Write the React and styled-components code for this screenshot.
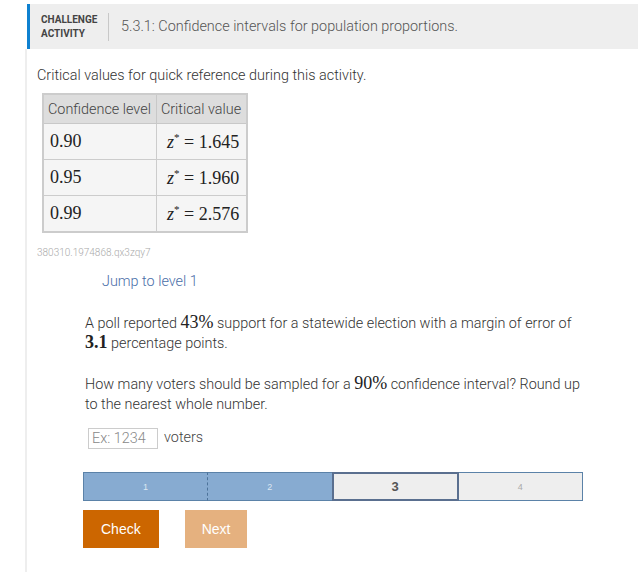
import React from "react";
import styled, { createGlobalStyle } from "styled-components";

const GlobalStyle = createGlobalStyle`
  body {
    margin: 0;
    background: #fff;
    font-family: Roboto, "Liberation Sans", sans-serif;
    color: #333;
  }
`;

const Page = styled.div`
  padding: 4px 0 0 25px;
  min-height: 568px;
`;

const Header = styled.div`
  display: flex;
  align-items: center;
  height: 45px;
  margin-left: 2px;
  background: #eee;
  border-left: 3px solid #0f81d0;
`;

const Label = styled.div`
  width: 67px;
  padding-left: 11px;
  font-size: 10px;
  font-weight: 700;
  line-height: 14px;
  color: #444;
`;

const Divider = styled.div`
  width: 1px;
  height: 28px;
  background: #c8c8c8;
  margin-right: 12px;
`;

const Title = styled.div`
  font-size: 14.4px;
  font-weight: 300;
  color: #555;
`;

const Body = styled.div`
  border-left: 2px solid #eee;
  padding: 18px 0 24px 10px;
`;

const Intro = styled.p`
  margin: 0 0 9px;
  font-size: 14.4px;
  font-weight: 300;
  color: #333;
`;

const Table = styled.table`
  margin-left: 5px;
  border-collapse: collapse;
  border: 2px solid #ccc;
`;

const HeadCell = styled.th`
  height: 28px;
  padding: 0 5px 0 4px;
  background: #ddd;
  border: 1px solid #c8c8c8;
  font-size: 14.4px;
  font-weight: 300;
  color: #444;
  text-align: left;
  white-space: nowrap;
`;

const Cell = styled.td`
  height: 35px;
  padding: 0 7px 0 6px;
  background: #f5f5f5;
  border: 1px solid #ccc;
  font-family: "Liberation Serif", "DejaVu Serif", serif;
  font-size: 18px;
  color: #222;
  text-align: ${(p) => (p.right ? "right" : "left")};
  white-space: nowrap;
`;

const Star = styled.sup`
  font-size: 11px;
`;

const Math = styled.span`
  font-family: "Liberation Serif", "DejaVu Serif", serif;
  font-size: 18px;
  line-height: 0;
  color: #222;
  font-weight: ${(p) => (p.bold ? 700 : 400)};
`;

const Var = styled.i`
  font-family: "Liberation Serif", serif;
`;

const Id = styled.div`
  margin-top: 14px;
  font-size: 10px;
  font-weight: 300;
  color: #aaa;
`;

const Jump = styled.div`
  margin: 15px 0 0 65px;
  font-size: 14.4px;
  color: #4a6ea8;
  font-weight: 300;
`;

const Question = styled.div`
  margin: 24px 0 0 48px;
  width: 510px;
`;

const Para = styled.p`
  margin: 0 0 21px;
  font-size: 14.4px;
  font-weight: 300;
  line-height: 20px;
  color: #333;
`;

const AnswerRow = styled.div`
  display: flex;
  align-items: center;
  gap: 6px;
  margin: -8px 0 0 3px;
`;

const Input = styled.input`
  width: 62px;
  height: 17px;
  padding: 1px 3px;
  border: 1px solid #ccc;
  font-family: Roboto, sans-serif;
  font-size: 14.4px;
  font-weight: 300;
  &::placeholder {
    color: #888;
  }
`;

const Unit = styled.span`
  font-size: 14.4px;
  font-weight: 300;
  color: #444;
  margin-top: -2px;
`;

const Levels = styled.div`
  display: flex;
  margin: 23px 0 0 -2px;
  width: 500px;
  height: 29px;
`;

const Level = styled.div`
  flex: 1;
  display: flex;
  align-items: center;
  justify-content: center;
  box-sizing: border-box;
  font-family: "Liberation Sans", Arial, sans-serif;
  font-size: ${(p) => (p.current ? "13px" : "9px")};
  font-weight: ${(p) => (p.current ? 700 : 400)};
  color: ${(p) => (p.done ? "#dce7f2" : p.current ? "#555" : "#aaa")};
  background: ${(p) => (p.done ? "#87abd1" : "#eee")};
  border: ${(p) => (p.current ? "2px solid #5a6f8f" : "1px solid #5b82a8")};
  border-left: ${(p) =>
    p.dashed
      ? "1px dashed #4d739a"
      : p.first
      ? "1px solid #5b82a8"
      : p.current
      ? "2px solid #5a6f8f"
      : "none"};
  border-right: ${(p) =>
    p.current ? "2px solid #5a6f8f" : p.last ? "1px solid #5b82a8" : "none"};
`;

const Buttons = styled.div`
  display: flex;
  gap: 26px;
  margin: 9px 0 0 -2px;
`;

const Button = styled.button`
  height: 38px;
  padding: 0 ${(p) => p.pad || "18px"};
  border: none;
  background: ${(p) => (p.disabled ? "#e5b17f" : "#cc6600")};
  color: #fff;
  font-family: "Liberation Sans", Arial, sans-serif;
  font-size: 14px;
`;

const rows = [
  ["0.90", "1.645"],
  ["0.95", "1.960"],
  ["0.99", "2.576"],
];

export default function App() {
  return (
    <>
      <GlobalStyle />
      <Page>
        <Header>
          <Label>
            CHALLENGE
            <br />
            ACTIVITY
          </Label>
          <Divider />
          <Title>5.3.1: Confidence intervals for population proportions.</Title>
        </Header>
        <Body>
          <Intro>Critical values for quick reference during this activity.</Intro>
          <Table>
            <thead>
              <tr>
                <HeadCell>Confidence level</HeadCell>
                <HeadCell>Critical value</HeadCell>
              </tr>
            </thead>
            <tbody>
              {rows.map(([c, z]) => (
                <tr key={c}>
                  <Cell>{c}</Cell>
                  <Cell right>
                    <Var>z</Var>
                    <Star>*</Star> = {z}
                  </Cell>
                </tr>
              ))}
            </tbody>
          </Table>
          <Id>380310.1974868.qx3zqy7</Id>
          <Jump>Jump to level 1</Jump>
          <Question>
            <Para>
              A poll reported <Math>43%</Math> support for a statewide election with a margin of
              error of <Math bold>3.1</Math> percentage points.
            </Para>
            <Para>
              How many voters should be sampled for a <Math>90%</Math> confidence interval? Round
              up to the nearest whole number.
            </Para>
            <AnswerRow>
              <Input placeholder="Ex: 1234" />
              <Unit>voters</Unit>
            </AnswerRow>
            <Levels>
              <Level done first>1</Level>
              <Level done dashed>2</Level>
              <Level current>3</Level>
              <Level last>4</Level>
            </Levels>
            <Buttons>
              <Button>Check</Button>
              <Button disabled pad="17px">Next</Button>
            </Buttons>
          </Question>
        </Body>
      </Page>
    </>
  );
}
